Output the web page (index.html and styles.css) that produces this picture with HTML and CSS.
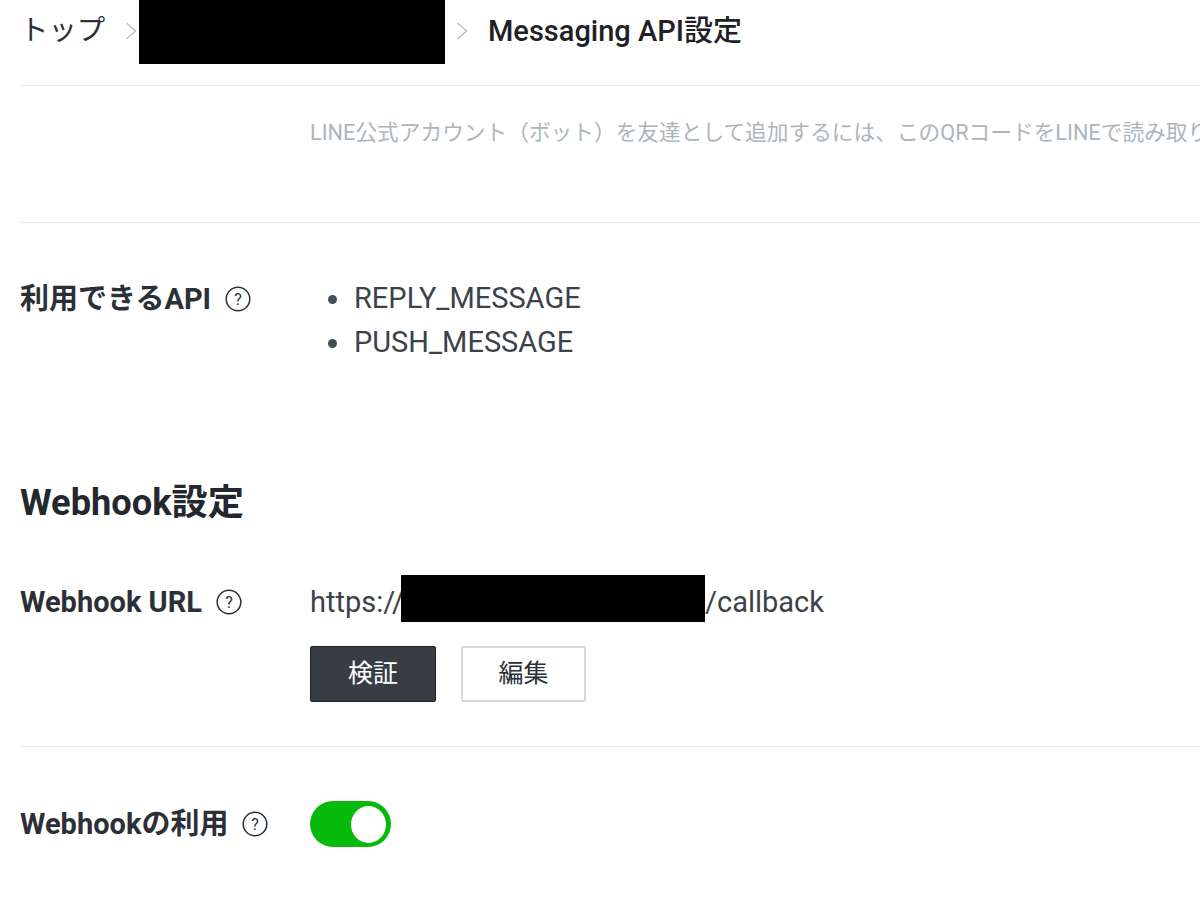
FILE: index.html
```html
<!DOCTYPE html>
<html lang="ja">
<head>
<meta charset="utf-8">
<title>Messaging API設定</title>
<link rel="stylesheet" href="styles.css">
</head>
<body>
<div class="page">
  <nav class="crumbs">
    <span class="crumb">トップ</span>
    <svg class="chev chev-a" width="12" height="20" viewBox="0 0 12 20"><path d="M1.5 2 L10.5 10 L1.5 18" fill="none" stroke="#b7bdc3" stroke-width="1.4"/></svg>
    <span class="redact-crumb"></span>
    <svg class="chev chev-b" width="12" height="20" viewBox="0 0 12 20"><path d="M1.5 2 L10.5 10 L1.5 18" fill="none" stroke="#b7bdc3" stroke-width="1.4"/></svg>
    <span class="crumb-current">Messaging API設定</span>
  </nav>
  <section class="qr-row">
    <p class="hint">LINE公式アカウント（ボット）を友達として追加するには、このQRコードをLINEで読み取ります。</p>
  </section>
  <section class="api-row">
    <div class="label">利用できるAPI
      <svg class="help" width="26" height="26" viewBox="0 0 26 26"><circle cx="13" cy="13" r="11.8" fill="none" stroke="#2b3038" stroke-width="1.5"/><text x="13" y="18.5" text-anchor="middle" class="help-q">?</text></svg>
    </div>
    <ul class="api-list">
      <li>REPLY_MESSAGE</li>
      <li>PUSH_MESSAGE</li>
    </ul>
  </section>
  <h2 class="heading">Webhook設定</h2>
  <section class="url-row">
    <div class="label label-url">Webhook URL
      <svg class="help" width="26" height="26" viewBox="0 0 26 26"><circle cx="13" cy="13" r="11.8" fill="none" stroke="#2b3038" stroke-width="1.5"/><text x="13" y="18.5" text-anchor="middle" class="help-q">?</text></svg>
    </div>
    <div class="url-col">
      <div class="url-line">https://<span class="redact-url"></span>/callback</div>
      <div class="buttons">
        <button class="btn btn-dark">検証</button>
        <button class="btn btn-light">編集</button>
      </div>
    </div>
  </section>
  <section class="use-row">
    <div class="label">Webhookの利用
      <svg class="help" width="26" height="26" viewBox="0 0 26 26"><circle cx="13" cy="13" r="11.8" fill="none" stroke="#2b3038" stroke-width="1.5"/><text x="13" y="18.5" text-anchor="middle" class="help-q">?</text></svg>
    </div>
    <div class="toggle"><span class="knob"></span></div>
  </section>
</div>
</body>
</html>
```
FILE: styles.css
```css
html, body {
  margin: 0;
  padding: 0;
  background: #fff;
}
body {
  width: 1200px;
  height: 913px;
  overflow: hidden;
  font-family: Roboto, "Noto Sans CJK JP", sans-serif;
  color: #3c424a;
}
.page {
  margin-left: 20px;
  width: 1180px;
}
.crumbs {
  display: flex;
  align-items: flex-start;
  height: 85px;
  border-bottom: 1px solid #e7e8e9;
}
.crumb {
  font-size: 28.4px;
  line-height: 62px;
  width: 85px;
  color: #2b3038;
  font-weight: 400;
  white-space: nowrap;
}
.chev { margin-top: 21px; flex: none; }
.chev-a { margin-left: 20px; }
.redact-crumb {
  width: 306px;
  height: 64px;
  margin-left: 2px;
  background: #000;
  flex: none;
}
.chev-b { margin-left: 11px; }
.crumb-current {
  margin-left: 20px;
  font-size: 29px;
  line-height: 62px;
  font-weight: 500;
  color: #1e2126;
  white-space: nowrap;
}
.qr-row {
  height: 136px;
  box-sizing: content-box;
  border-bottom: 1px solid #e7e8e9;
  padding-left: 290px;
  overflow: hidden;
}
.hint {
  margin: 0;
  padding-top: 32px;
  font-size: 21.7px;
  line-height: 30px;
  color: #adb5bb;
  white-space: nowrap;
}
.api-row {
  display: flex;
  height: 244px;
  padding-top: 54px;
  box-sizing: border-box;
}
.label {
  display: flex;
  align-items: center;
  gap: 14px;
  width: 290px;
  font-size: 29px;
  font-weight: 700;
  line-height: 44px;
  height: 44px;
  color: #2b3038;
  white-space: nowrap;
  flex: none;
}
.label-url { margin-top: 5px; }
.help { flex: none; }
.help-q {
  font-size: 16px;
  font-weight: 400;
  fill: #2b3038;
}
.api-list {
  list-style: none;
  margin: 0;
  padding: 0 0 0 18px;
}
.api-list li {
  position: relative;
  padding-left: 26px;
  font-size: 29px;
  line-height: 43.5px;
  font-weight: 400;
}
.api-list li::before {
  content: "";
  position: absolute;
  left: 0;
  top: 18px;
  width: 9px;
  height: 9px;
  border-radius: 50%;
  background: #474d55;
}
.heading {
  margin: 0;
  height: 108px;
  font-size: 36.2px;
  line-height: 72px;
  font-weight: 700;
  color: #24282e;
}
.url-row {
  display: flex;
  height: 171px;
  border-bottom: 1px solid #e7e8e9;
}
.url-line {
  display: flex;
  align-items: flex-start;
  height: 47px;
  font-size: 29px;
  line-height: 55px;
  white-space: nowrap;
}
.redact-url {
  display: block;
  width: 304px;
  height: 47px;
  margin-left: -3px;
  background: #000;
}
.buttons {
  display: flex;
  gap: 25px;
  margin-top: 24px;
}
.btn {
  width: 126px;
  height: 56px;
  border-radius: 2px;
  font-family: inherit;
  font-size: 25px;
  padding: 0 0 7px;
}
.btn-dark {
  background: #383c44;
  border: 1px solid #1f2227;
  color: #fff;
}
.btn-light {
  background: #fff;
  border: 2px solid #d6d9dc;
  color: #2b3038;
  width: 125px;
}
.use-row {
  display: flex;
  align-items: center;
  padding-top: 54px;
}
.toggle {
  display: flex;
  justify-content: flex-end;
  align-items: center;
  width: 81px;
  height: 46px;
  border-radius: 23px;
  background: #06b90a;
  box-sizing: border-box;
  padding-right: 5px;
}
.knob {
  width: 35px;
  height: 37px;
  border-radius: 50%;
  background: #fff;
}
```
